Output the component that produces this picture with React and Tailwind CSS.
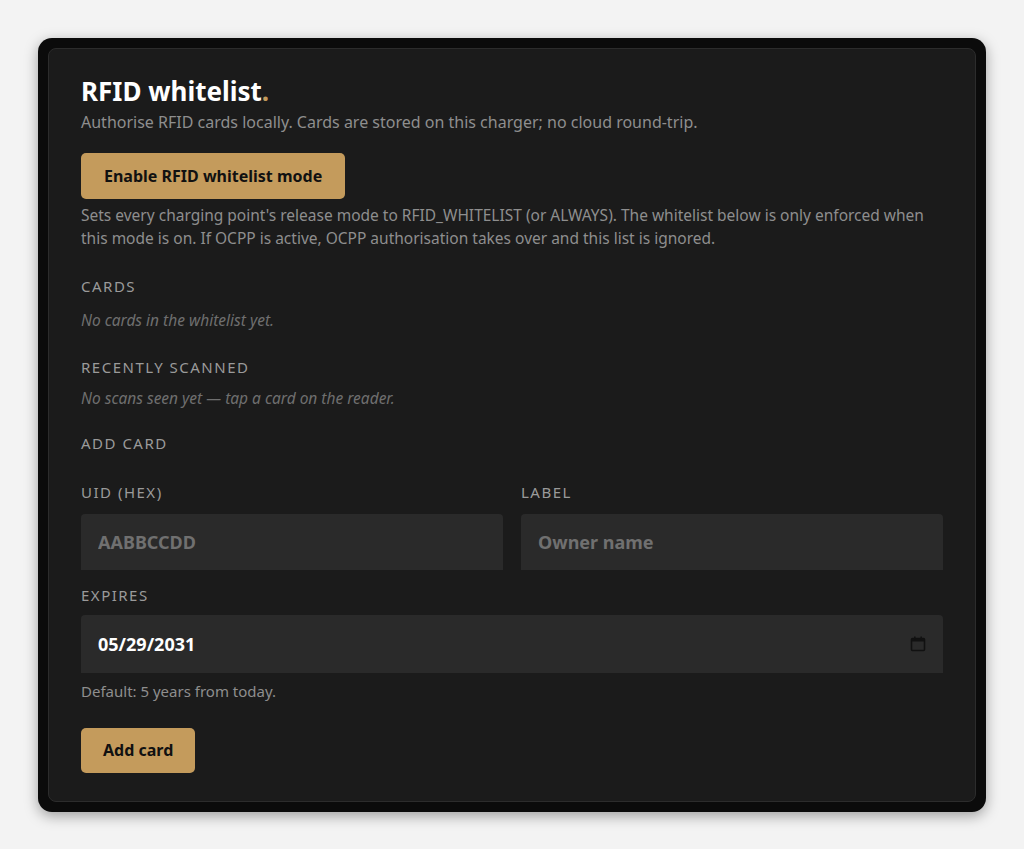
export default function App() {
  return (
    <div className="min-h-[849px] bg-[#f3f3f3] px-[38px] pt-[38px] font-['DejaVu_Sans',sans-serif]">
      <div className="rounded-[14px] bg-[#0b0b0b] p-[10px] shadow-[0_4px_14px_rgba(0,0,0,0.35)]">
        <div className="rounded-[8px] border border-[#2c2c2c] bg-[#1b1b1b] px-[32px] pb-[28px] pt-[26px]">
          <h1 className="text-[26px] font-bold leading-[32px] text-white">
            RFID whitelist<span className="text-[#c49b5c]">.</span>
          </h1>
          <p className="mt-[4px] text-[16px] leading-[22px] text-[#8e8e8e]">
            Authorise RFID cards locally. Cards are stored on this charger; no cloud round-trip.
          </p>
          <button className="mt-[20px] h-[46px] rounded-[5px] bg-[#c49b5c] px-[23px] text-[16px] font-bold text-[#111]">
            Enable RFID whitelist mode
          </button>
          <p className="mt-[5px] text-[15.5px] leading-[23px] text-[#8e8e8e]">
            Sets every charging point's release mode to RFID_WHITELIST (or ALWAYS). The whitelist below is only enforced when this mode is on. If OCPP is active, OCPP authorisation takes over and this list is ignored.
          </p>

          <div className="mt-[25px] text-[15px] tracking-[0.1em] text-[#9a9a9a]">CARDS</div>
          <p className="mt-[11px] text-[15.5px] italic text-[#6f6f6f]">No cards in the whitelist yet.</p>

          <div className="mt-[24px] text-[15px] tracking-[0.1em] text-[#9a9a9a]">RECENTLY SCANNED</div>
          <p className="mt-[9px] text-[15.5px] italic text-[#6f6f6f]">No scans seen yet — tap a card on the reader.</p>

          <div className="mt-[21px] text-[15px] tracking-[0.1em] text-[#9a9a9a]">ADD CARD</div>

          <div className="mt-[27px] grid grid-cols-2 gap-[18px]">
            <div>
              <div className="text-[15px] tracking-[0.1em] text-[#9a9a9a]">UID (HEX)</div>
              <input
                placeholder="AABBCCDD"
                className="mt-[10px] h-[56px] w-full rounded-t-[4px] bg-[#2a2a2a] px-[17px] text-[18px] font-bold text-white placeholder:text-[#707070] outline-none"
              />
            </div>
            <div>
              <div className="text-[15px] tracking-[0.1em] text-[#9a9a9a]">LABEL</div>
              <input
                placeholder="Owner name"
                className="mt-[10px] h-[56px] w-full rounded-t-[4px] bg-[#2a2a2a] px-[17px] text-[18px] font-bold text-white placeholder:text-[#707070] outline-none"
              />
            </div>
          </div>

          <div className="mt-[14px] text-[15px] tracking-[0.1em] text-[#9a9a9a]">EXPIRES</div>
          <div className="mt-[9px] flex h-[58px] items-center justify-between rounded-t-[4px] bg-[#2a2a2a] px-[17px]">
            <span className="text-[18px] font-bold text-white">05/29/2031</span>
            <svg width="16" height="16" viewBox="0 0 16 16" fill="none">
              <rect x="1.5" y="2.5" width="13" height="12" rx="1" stroke="#111" strokeWidth="1.6" />
              <rect x="1.5" y="2.5" width="13" height="3" fill="#111" />
              <rect x="4" y="0.5" width="1.6" height="3" fill="#111" />
              <rect x="10.4" y="0.5" width="1.6" height="3" fill="#111" />
            </svg>
          </div>
          <p className="mt-[7px] text-[15px] text-[#8e8e8e]">Default: 5 years from today.</p>

          <button className="mt-[25px] h-[45px] rounded-[5px] bg-[#c49b5c] px-[22px] text-[16px] font-bold text-[#111]">
            Add card
          </button>
        </div>
      </div>
    </div>
  );
}
